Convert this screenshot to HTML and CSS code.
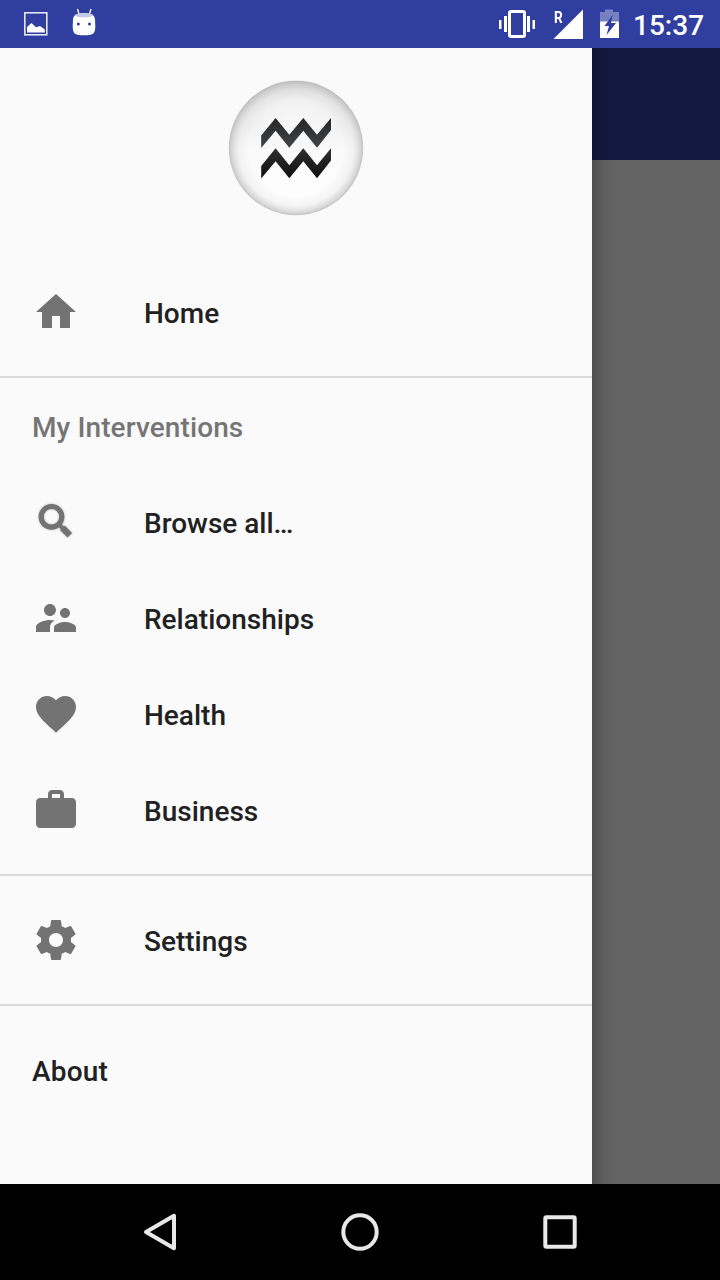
FILE: index.html
```html
<!DOCTYPE html>
<html lang="en">
<head>
<meta charset="utf-8">
<title>Navigation drawer</title>
<link rel="stylesheet" href="styles.css">
</head>
<body>
<div class="screen">
  <header class="status-bar">
    <svg class="status-left" width="110" height="48" viewBox="0 0 110 48">
      <rect x="24.8" y="12.8" width="22" height="22" fill="none" stroke="#e4e6f4" stroke-width="1.6"/>
      <path d="M27 32.500v-5.500l4.500-4 4.500 4.200 4-1.200 4.800 3.500v3z" fill="#fff"/>
      <path d="M77.500 9l1.500 5M91 9l-1.500 5" stroke="#fff" stroke-width="1.300"/>
      <path d="M73 20q0-4 3-5.500 8-3 16 0 3 1.500 3 5.500l.3 6q0 5-1.500 7-1.800 2.300-9.800 2.300t-9.800-2.300q-1.500-2-1.500-7z" fill="#fff"/>
      <path d="M74.500 15q4.500-2 9.500-2t9.500 2q-2 2.500-9.500 2.500T74.500 15z" fill="#c5cae9"/>
      <circle cx="78.300" cy="24" r="1.500" fill="#303f9f"/><circle cx="89.500" cy="24" r="1.500" fill="#303f9f"/>
    </svg>
    <div class="status-right">
      <svg width="130" height="48" viewBox="494 0 130 48">
        <rect x="509.500" y="11.500" width="15" height="25" rx="1.500" fill="none" stroke="#fff" stroke-width="3"/>
        <path d="M499 20h2.500v9h-2.500zM504 16h3v16h-3zM527 16h3v16h-3zM532.500 20h2.500v9h-2.500z" fill="#fff"/>
        <path d="M583 9.500V39h-29.500z" fill="#fff"/>
        <path d="M600 12h5V9.500h8V12h6v10h-19z" fill="#7780c0"/>
        <path d="M600 21.500h19V38h-19z" fill="#fff"/>
        <path d="M612.500 15l-8 11h4.500l-2.500 9 9.500-12h-5z" fill="#303f9f"/>
      </svg>
      <span class="roaming">R</span>
      <span class="clock">15:37</span>
    </div>
  </header>
  <main class="content">
    <nav class="drawer">
      <div class="drawer-header">
        <svg width="136" height="136" viewBox="0 0 136 136">
          <defs>
            <radialGradient id="rim"><stop offset=".7" stop-color="#bbb" stop-opacity="0"/><stop offset=".86" stop-color="#bbb" stop-opacity=".14"/><stop offset=".96" stop-color="#aaa" stop-opacity=".45"/><stop offset="1" stop-color="#aaa" stop-opacity=".7"/></radialGradient>
            <linearGradient id="gloss" x2="0" y2="1"><stop offset="0" stop-color="#e2e2e2"/><stop offset=".3" stop-color="#efefef"/><stop offset=".52" stop-color="#fafafa"/><stop offset="1" stop-color="#fff"/></linearGradient>
            <radialGradient id="shine"><stop offset="0" stop-color="#fff" stop-opacity=".5"/><stop offset=".6" stop-color="#fff" stop-opacity=".35"/><stop offset="1" stop-color="#fff" stop-opacity="0"/></radialGradient>
            <linearGradient id="upper" x2="0" y2="1"><stop offset="0" stop-color="#262626"/><stop offset="1" stop-color="#424446"/></linearGradient>
            <linearGradient id="lower" x2="0" y2="1"><stop offset="0" stop-color="#303030"/><stop offset="1" stop-color="#101010"/></linearGradient>
          </defs>
          <circle cx="68" cy="68" r="67.200" fill="url(#gloss)"/>
          <ellipse cx="68" cy="37" rx="48" ry="29" fill="url(#shine)"/>
          <circle cx="68" cy="68" r="67.200" fill="url(#rim)"/>
          <path d="M33.200 55.500L47.600 38 61.300 54.800 75.300 38 89 54.800 103 38V50L89 67.800 75.300 50.700 61.300 67.800 47.600 50.700 33.200 68z" fill="url(#upper)"/>
          <path d="M33.200 86L47.600 68.300 61.300 85.300 75.300 68.300 89 85.300 103 68.300V80.500L89 98.300 75.300 81.200 61.300 98.300 47.600 81.200 33.200 98.500z" fill="url(#lower)"/>
        </svg>
      </div>
      <a class="item"><svg class="icon" viewBox="0 0 24 24"><path d="M10 20v-6h4v6h5v-8h3L12 3 2 12h3v8z"/></svg>Home</a>
      <h2 class="subheader">My Interventions</h2>
      <a class="item"><svg class="icon search" viewBox="0 0 48 48"><circle cx="19.500" cy="18.800" r="10.300"/><path class="neck" d="M27 26.500l4 4"/><path class="handle" d="M30.500 30l7.300 7.300"/></svg>Browse all…</a>
      <a class="item"><svg class="icon" viewBox="0 0 24 24"><path d="M16.500 12c1.380 0 2.490-1.120 2.490-2.500S17.880 7 16.500 7C15.120 7 14 8.120 14 9.500s1.120 2.500 2.500 2.500zM9 11c1.660 0 2.990-1.340 2.990-3S10.660 5 9 5C7.340 5 6 6.340 6 8s1.340 3 3 3zm7.500 3c-1.830 0-5.500.92-5.500 2.750V19h11v-2.250c0-1.830-3.670-2.750-5.500-2.750zM9 13c-2.330 0-7 1.170-7 3.500V19h7v-2.250c0-.85.330-2.340 2.370-3.470C10.500 13.100 9.660 13 9 13z"/></svg>Relationships</a>
      <a class="item"><svg class="icon" viewBox="0 0 24 24"><path d="M12 21.350l-1.450-1.320C5.400 15.360 2 12.280 2 8.500 2 5.420 4.420 3 7.500 3c1.740 0 3.410.81 4.500 2.090C13.090 3.810 14.760 3 16.500 3 19.580 3 22 5.420 22 8.500c0 3.780-3.400 6.860-8.550 11.540L12 21.350z"/></svg>Health</a>
      <a class="item"><svg class="icon" viewBox="0 0 24 24"><path d="M20 6h-4V4c0-1.110-.89-2-2-2h-4c-1.110 0-2 .89-2 2v2H4c-1.110 0-1.990.89-1.990 2L2 19c0 1.110.89 2 2 2h16c1.110 0 2-.89 2-2V8c0-1.110-.89-2-2-2zm-6 0h-4V4h4v2z"/></svg>Business</a>
      <div class="group">
        <a class="item"><svg class="icon" viewBox="0 0 24 24"><path d="M19.430 12.980c.04-.32.07-.64.07-.98s-.03-.66-.07-.98l2.110-1.650c.19-.15.240-.42.120-.64l-2-3.460c-.12-.22-.39-.3-.61-.22l-2.490 1c-.52-.4-1.080-.73-1.690-.98l-.38-2.650C14.460 2.180 14.250 2 14 2h-4c-.25 0-.46.180-.49.420l-.38 2.650c-.61.250-1.170.590-1.690.980l-2.490-1c-.23-.09-.49 0-.61.220l-2 3.460c-.13.220-.07.490.12.640l2.110 1.650c-.04.320-.07.650-.07.980s.03.660.07.980l-2.110 1.650c-.19.150-.24.420-.12.640l2 3.460c.12.220.39.300.61.220l2.490-1c.52.400 1.080.730 1.690.980l.38 2.650c.03.240.24.420.49.420h4c.25 0 .46-.18.49-.42l.38-2.650c.61-.25 1.170-.59 1.690-.98l2.490 1c.23.090.49 0 .61-.22l2-3.460c.12-.22.070-.49-.12-.64l-2.110-1.650zM12 15.500c-1.930 0-3.500-1.570-3.500-3.500s1.570-3.500 3.500-3.500 3.500 1.570 3.500 3.500-1.570 3.500-3.500 3.500z"/></svg>Settings</a>
      </div>
      <div class="group">
        <a class="item about">About</a>
      </div>
    </nav>
    <div class="backdrop"><div class="app-bar"></div></div>
  </main>
  <footer class="nav-bar">
    <svg viewBox="0 0 48 48"><path d="M10 24L38 7.800V40.200z"/></svg>
    <svg viewBox="0 0 48 48"><circle cx="24" cy="24" r="16.700"/></svg>
    <svg viewBox="0 0 48 48"><rect x="9.300" y="9.300" width="29.400" height="29.400" rx="1"/></svg>
  </footer>
</div>
</body>
</html>
```

FILE: styles.css
```css
* { box-sizing: border-box; }
body { margin: 0; font-family: Roboto, "Noto Sans", sans-serif; }
.screen { width: 720px; height: 1280px; display: flex; flex-direction: column; overflow: hidden; }
svg { display: block; flex: none; }

.status-bar { height: 48px; background: #303f9f; display: flex; justify-content: space-between; color: #fff; }
.status-right { position: relative; width: 226px; display: flex; }
.roaming { position: absolute; left: 60px; top: 9px; font-size: 16px; line-height: 18px; font-weight: 700; transform: scaleX(.85); transform-origin: left; }
.clock { margin-left: 9px; font-size: 28px; line-height: 52px; font-weight: 500; white-space: nowrap; }

.content { flex: 1; display: flex; min-height: 0; }
.drawer { width: 592px; background: #fafafa; color: #212121; }
.drawer-header { height: 216px; padding-top: 32px; display: flex; justify-content: center; }
.item { height: 96px; padding: 4px 32px 0; display: flex; align-items: center; gap: 64px; font-size: 28px; line-height: 34px; font-weight: 500; }
.about { letter-spacing: .2px; }
.icon { width: 48px; height: 48px; fill: #737373; margin-top: -4px; }
.search { fill: none; stroke: #737373; stroke-width: 5.2; filter: drop-shadow(0 0 1px rgba(0, 0, 0, .3)); }
.search .neck { stroke-width: 4; }
.search .handle { stroke-width: 6.5; }
.subheader { margin: 16px 0 0; height: 98px; padding: 4px 32px 0; border-top: 2px solid #dadada; display: flex; align-items: center; font-size: 28px; line-height: 34px; font-weight: 500; letter-spacing: .1px; color: #757575; }
.group { margin-top: 16px; padding-top: 16px; border-top: 2px solid #dadada; }

.backdrop { flex: 1; background: linear-gradient(90deg, rgba(0, 0, 0, .22), rgba(0, 0, 0, .06) 12px, transparent 24px), #646464; }
.app-bar { height: 112px; background: linear-gradient(90deg, rgba(0, 0, 0, .22), rgba(0, 0, 0, .06) 12px, transparent 24px), #141941; }

.nav-bar { height: 96px; background: #000; display: flex; align-items: center; justify-content: center; gap: 152px; }
.nav-bar svg { width: 48px; height: 48px; fill: none; stroke: #e8e8e8; stroke-width: 4; stroke-linejoin: round; }
```
